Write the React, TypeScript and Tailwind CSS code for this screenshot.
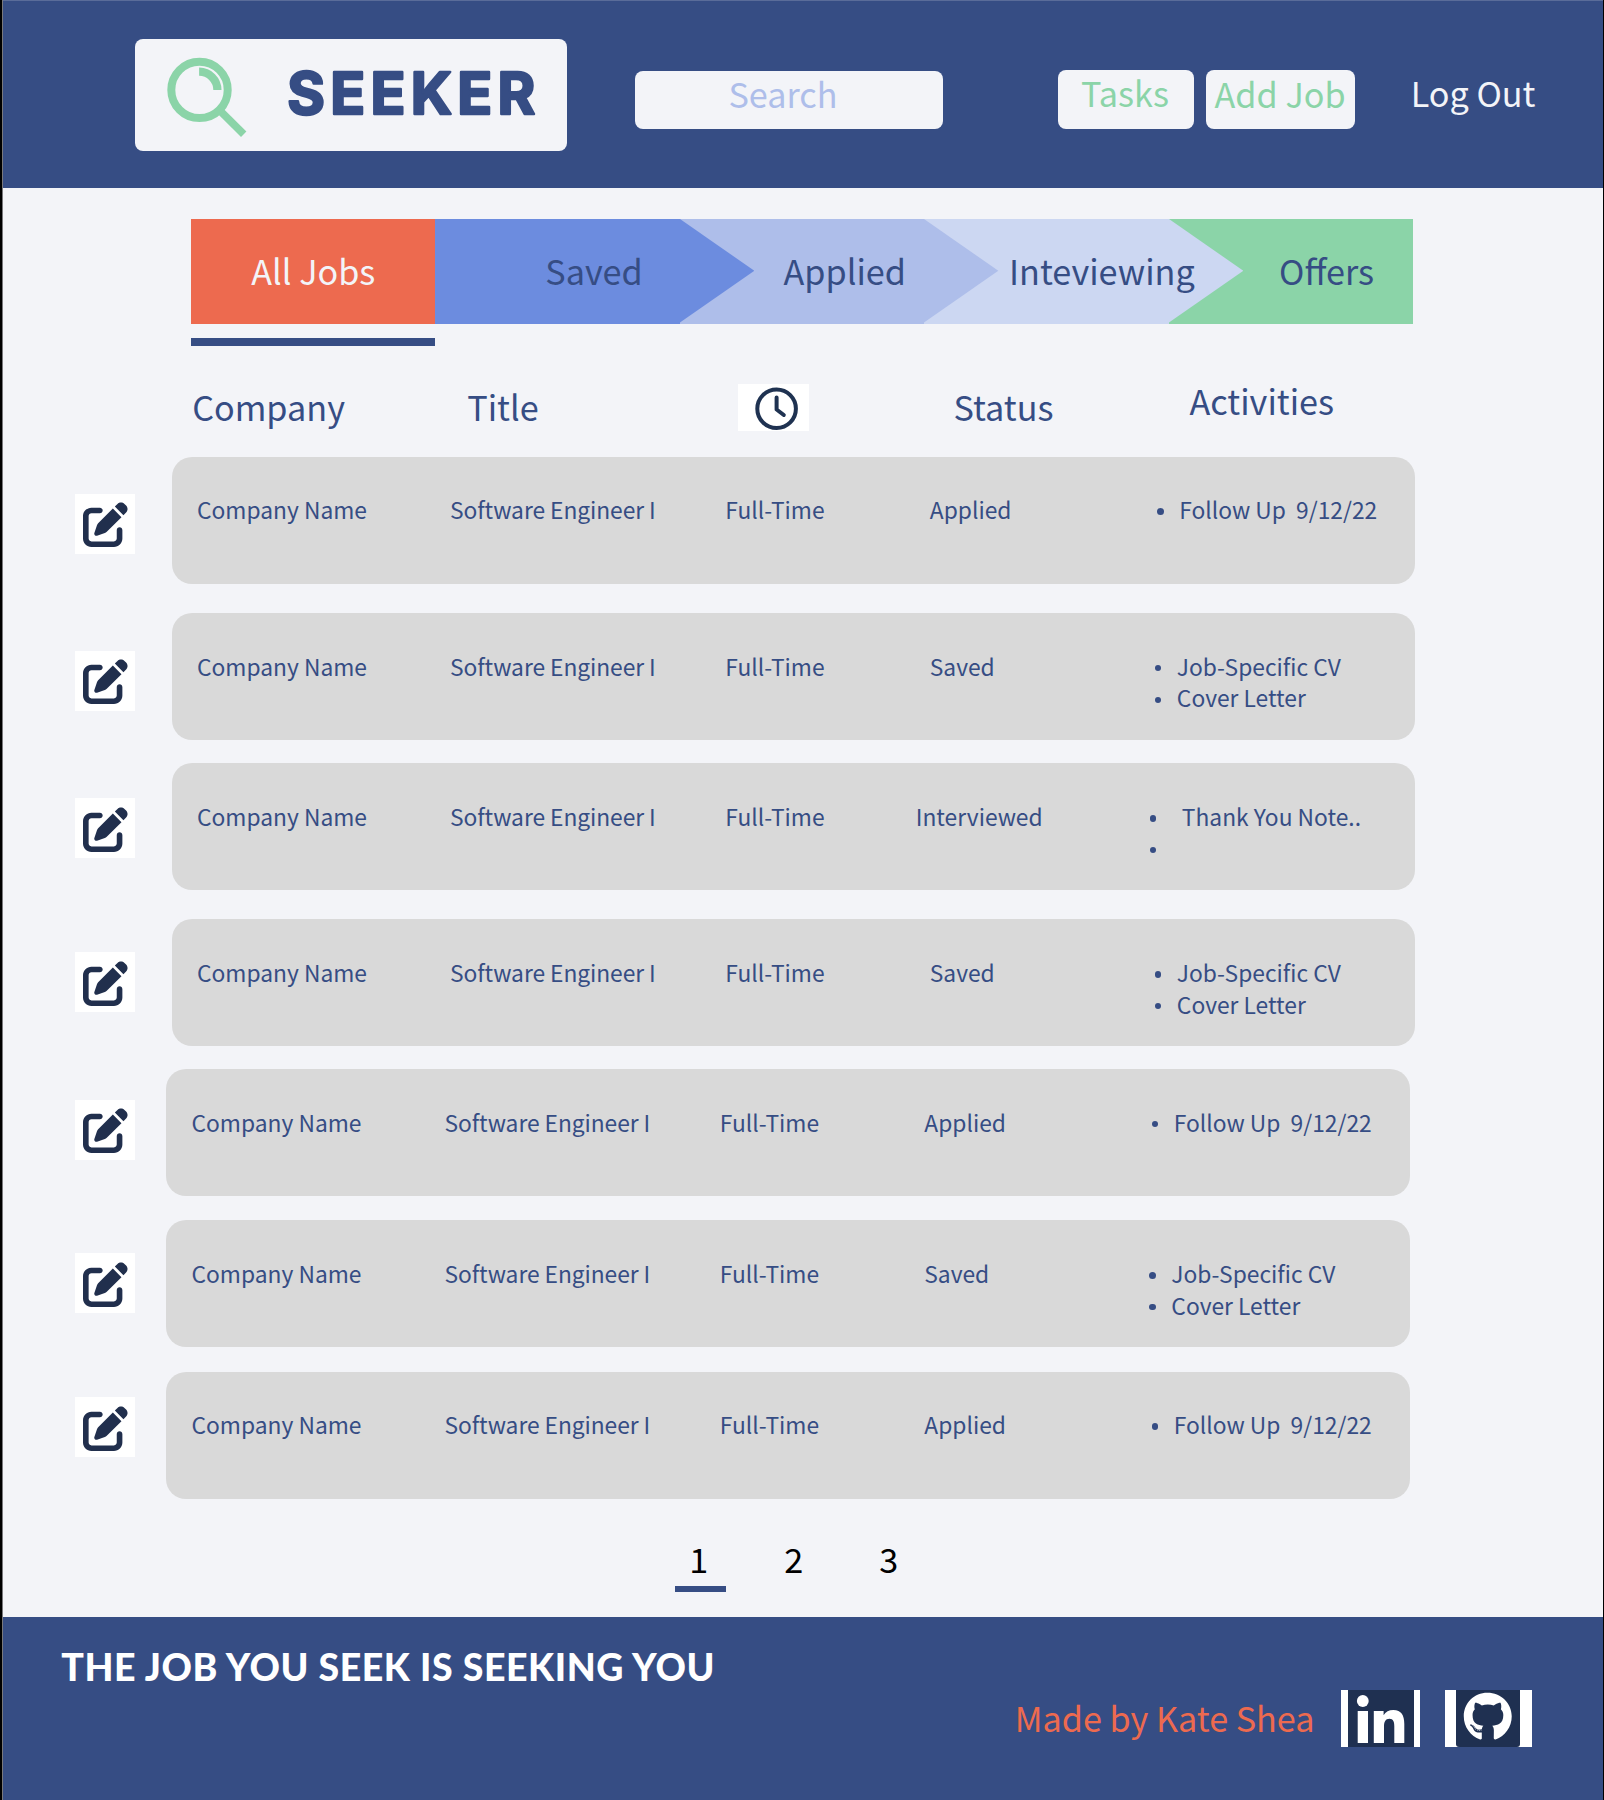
import { FaPenToSquare, FaGithub } from "react-icons/fa6";

type Job = {
  status: string;
  statusClass?: string;
  activities: string[];
  listClass: string;
  itemClass: string;
  iconTop: string;
  rowClass: string;
  cardClass: string;
};

const followUp = { activities: ["Follow Up  9/12/22"], listClass: "pl-[15.5px]", itemClass: "gap-[15.5px]" };
const documents = { activities: ["Job-Specific CV", "Cover Letter"], listClass: "pl-[13.2px]", itemClass: "gap-[15.5px]" };

const jobs: Job[] = [
  { status: "Applied", ...followUp, rowClass: "mt-[25.7px]", iconTop: "mt-[37.3px]", cardClass: "ml-[36.9px]" },
  { status: "Saved", ...documents, rowClass: "mt-[29.6px]", iconTop: "mt-[37.5px]", cardClass: "ml-[36.9px]" },
  {
    status: "Interviewed",
    statusClass: "-ml-[14px] mr-[14px]",
    activities: ["Thank You Note..", ""],
    listClass: "pl-[8.2px] pt-[0.5px]",
    itemClass: "gap-[25.5px]",
    rowClass: "mt-[22.6px]",
    iconTop: "mt-[35.5px]",
    cardClass: "ml-[36.9px]",
  },
  { status: "Saved", ...documents, rowClass: "mt-[29.6px]", iconTop: "mt-[33px]", cardClass: "ml-[36.9px]" },
  { status: "Applied", ...followUp, rowClass: "mt-[22.6px]", iconTop: "mt-[30.6px]", cardClass: "ml-[31.4px]" },
  { status: "Saved", ...documents, rowClass: "mt-[24.3px]", iconTop: "mt-[33px]", cardClass: "ml-[31.4px]" },
  { status: "Applied", ...followUp, rowClass: "mt-[24.3px]", iconTop: "mt-[25.7px]", cardClass: "ml-[31.4px]" },
];

function Logo() {
  return (
    <div className="ml-[131.8px] mt-[38.3px] h-[111.4px] w-[432px] shrink-0 rounded-[8px] bg-[#f3f4f8]">
      <svg viewBox="0 0 432 111.4" className="h-full w-full" aria-label="Seeker">
        <g fill="none" stroke="#8bd4a8">
          <circle cx="64.5" cy="50.9" r="28.2" strokeWidth="8" />
          <path d="M64.1 32.7a18.3 18.3 0 0 1 18.3 18.3" strokeWidth="8.2" />
          <path d="M85.8 72.5L108.7 95.2" strokeWidth="7.6" />
        </g>
        <text
          x="152.3"
          y="75"
          textLength="248"
          fill="#364d84"
          stroke="#364d84"
          strokeWidth="2.4"
          strokeLinejoin="round"
          className="font-['Inter',sans-serif] text-[57.5px] font-bold"
        >
          SEEKER
        </text>
      </svg>
    </div>
  );
}

function Header() {
  return (
    <header className="flex h-[187.6px] items-start border-t border-[#5a6c99] bg-[#364d84]">
      <Logo />
      <div className="ml-[68.6px] mt-[70px] h-[57.6px] w-[307.4px] shrink-0 rounded-[8px] bg-[#f3f4f8] pl-[93px] pt-[0.4px] text-[#aebeea]">
        Search
      </div>
      <button className="ml-[115.3px] mt-[69px] flex h-[58.5px] w-[135.6px] shrink-0 items-start rounded-[8px] bg-[#f3f4f8] pl-[23px] text-[#8bd4a8]">
        Tasks
      </button>
      <button className="ml-[12.6px] mt-[69px] flex h-[58.5px] w-[148.4px] shrink-0 items-start rounded-[8px] bg-[#f3f4f8] pl-[8.3px] pt-[1.2px] text-[#8bd4a8]">
        Add Job
      </button>
      <a className="ml-[56px] mt-[69px] text-[#f3f4f8]">Log Out</a>
    </header>
  );
}

function Arrow({ className }: { className: string }) {
  return (
    <svg viewBox="0 0 74 104" preserveAspectRatio="none" className={`absolute left-full top-0 z-10 h-[103.5px] w-[74.3px] ${className}`}>
      <path d="M0 0L74 52L0 104Z" fill="currentColor" />
    </svg>
  );
}

function Tabs() {
  return (
    <nav className="ml-[187.8px] mt-[31.7px] w-[1222.6px] text-[#364d84]">
      <div className="grid h-[104.7px] grid-cols-5">
        <div className="bg-[#ed6a4f] pl-[60.5px] pt-[29px] text-[#f3f4f8]">All Jobs</div>
        <div className="relative bg-[#6c8cdf] pl-[110px] pt-[29px]">
          Saved
          <Arrow className="text-[#6c8cdf]" />
        </div>
        <div className="relative bg-[#aebeea] pl-[103.7px] pt-[29px]">
          Applied
          <Arrow className="text-[#aebeea]" />
        </div>
        <div className="relative bg-[#ccd7f2] pl-[84.7px] pt-[29px]">
          <span className="relative z-20">Inteviewing</span>
          <Arrow className="text-[#ccd7f2]" />
        </div>
        <div className="bg-[#8bd4a8] pl-[110.2px] pt-[29px]">Offers</div>
      </div>
      <div className="mt-[14px] h-[8.3px] w-[244.5px] bg-[#364d84]" />
    </nav>
  );
}

function ColumnTitles() {
  return (
    <div className="mt-[37.3px] flex h-[47.4px] items-start pl-[189.2px] text-[#364d84]">
      <div className="w-[275px]">Company</div>
      <div className="w-[270.8px]">Title</div>
      <svg viewBox="0 0 71 47.4" className="h-[47.4px] w-[71px] bg-white" fill="none" stroke="#1f3251" strokeWidth="4">
        <circle cx="38.6" cy="24.7" r="19.3" />
        <path d="M38.6 13.5V25.5L45.8 31" strokeLinecap="round" strokeLinejoin="round" />
      </svg>
      <div className="w-[235.5px] pl-[144.5px]">Status</div>
      <div className="-mt-[6px] pl-[145px]">Activities</div>
    </div>
  );
}

function JobRow({ job }: { job: Job }) {
  return (
    <div className={`flex h-[127px] items-start pl-[71.8px] ${job.rowClass}`}>
      <button className={`flex h-[60px] w-[60px] shrink-0 items-center justify-center bg-white ${job.iconTop}`}>
        <FaPenToSquare className="ml-[2px] mt-[2px] h-[45px] w-[45px] text-[#212f4d]" />
      </button>
      <div
        className={`flex h-[127px] w-[1243.8px] shrink-0 items-start rounded-[20px] bg-[#d9d9d9] pl-[25.3px] pt-[37.7px] text-[22.8px] leading-[32px] text-[#364d84] ${job.cardClass}`}
      >
        <div className="w-[253px] shrink-0">Company Name</div>
        <div className="w-[275.3px] shrink-0 tracking-[-0.06px]">Software Engineer I</div>
        <div className="w-[204.5px] shrink-0">Full-Time</div>
        <div className={`w-[212px] shrink-0 ${job.statusClass ?? ""}`}>{job.status}</div>
        <ul className={job.listClass}>
          {job.activities.map((activity, i) => (
            <li key={i} className={`flex h-[31.7px] items-center whitespace-pre ${job.itemClass}`}>
              <span className="mt-[3px] h-[6.4px] w-[6.4px] rounded-full bg-[#364d84]" />
              <span>{activity}</span>
            </li>
          ))}
        </ul>
      </div>
    </div>
  );
}

function Pagination() {
  return (
    <div className="mt-[37px] flex h-[81.5px] pl-[671.8px] text-black">
      <div className="h-[56.5px] w-[51px] border-b-[6px] border-[#364d84] pr-[3px] text-center">1</div>
      <div className="ml-[44px] w-[51px] pr-[3px] text-center">2</div>
      <div className="ml-[44px] w-[51px] pr-[3px] text-center">3</div>
    </div>
  );
}

function LinkedInMark() {
  return (
    <svg viewBox="0 0 66 56.5" className="h-[56.5px] w-[66px] bg-[#1f3051]" fill="white" aria-label="LinkedIn">
      <circle cx="14.8" cy="11" r="5.9" />
      <path d="M9.7 21H20V53H9.7Z" />
      <path d="M25.8 21H35.6V25.3C37.6 22 41 20.1 45.3 20.1C53.5 20.1 56.3 25.5 56.3 34V53H46.3V36.5C46.3 32 45.4 28.8 41.4 28.8C37.4 28.8 36 32 36 36.3V53H25.8Z" />
    </svg>
  );
}

function Footer() {
  return (
    <footer className="h-[184px] bg-[#364d84] pt-[26px]">
      <h2 className="pl-[58.3px] font-['Lato',sans-serif] text-[37.5px] font-black leading-[48px] tracking-[0.58px] text-white">
        THE JOB YOU SEEK IS SEEKING YOU
      </h2>
      <div className="-mt-px flex items-start pl-[1011.7px]">
        <p className="w-[326.4px] pt-[4.5px] text-[#ed6a4f]">Made by Kate Shea</p>
        <div className="flex h-[56.5px] w-[79px] justify-center bg-white">
          <LinkedInMark />
        </div>
        <div className="ml-[24.5px] flex h-[56.5px] w-[87px] justify-center bg-white">
          <div className="flex w-[64.5px] justify-center rounded-b-[3px] bg-[#1f3051] pt-[2px]">
            <FaGithub className="h-[49.5px] w-[49.5px] text-white" />
          </div>
        </div>
      </div>
    </footer>
  );
}

export default function App() {
  return (
    <div className="h-[1800px] w-[1604px] overflow-hidden whitespace-nowrap border-l-2 border-r border-black bg-[#f3f4f8] font-['Noto_Sans_CJK_SC',sans-serif] text-[34.2px] leading-[44px]">
      <div className="border-l border-[#79797c]">
        <Header />
        <Tabs />
        <ColumnTitles />
        {jobs.map((job, i) => (
          <JobRow key={i} job={job} />
        ))}
        <Pagination />
        <Footer />
      </div>
    </div>
  );
}
